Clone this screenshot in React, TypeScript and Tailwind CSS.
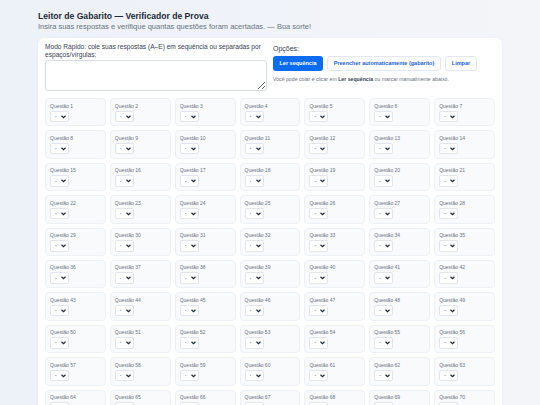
import { useState } from "react"

const OPTIONS = ["-", "A", "B", "C", "D", "E"]
const TOTAL = 100

function QuestionCell({ n, value, onChange }: { n: number; value: string; onChange: (v: string) => void }) {
  return (
    <div className="h-[28.4px] rounded-[4px] border border-[#edf0f5] bg-[#f9fafc] px-[4px] pt-[3.5px]">
      <div className="text-[5px] leading-[6px] text-[#6b7280]">Questão {n}</div>
      <div className="relative mt-[2px] w-[19px]">
        <select
          value={value}
          onChange={(e) => onChange(e.target.value)}
          className="block h-[11.5px] w-[19px] appearance-none rounded-[2px] border border-[#e2e6ec] bg-white pl-[4px] text-[5px] leading-[9px] text-[#374151] outline-none"
        >
          {OPTIONS.map((o) => (
            <option key={o} value={o}>
              {o}
            </option>
          ))}
        </select>
        <svg
          className="pointer-events-none absolute right-[3px] top-[4px] h-[4px] w-[5px]"
          viewBox="0 0 10 8"
          fill="none"
          stroke="#1f2937"
          strokeWidth="2.4"
        >
          <path d="M1 1.5l4 4 4-4" />
        </svg>
      </div>
    </div>
  )
}

export default function App() {
  const [text, setText] = useState("")
  const [answers, setAnswers] = useState<string[]>(Array(TOTAL).fill("-"))

  function readSequence() {
    const letters = text.toUpperCase().replace(/[^A-E]/g, "").split("")
    setAnswers((prev) => prev.map((a, i) => letters[i] ?? a))
  }

  function autoFill() {
    setAnswers(Array.from({ length: TOTAL }, (_, i) => "ABCDE"[i % 5]))
  }

  function clear() {
    setText("")
    setAnswers(Array(TOTAL).fill("-"))
  }

  return (
    <div
      className="min-h-screen bg-gradient-to-r from-[#edf1f8] to-[#f3f5f9] pt-[10px]"
      style={{ fontFamily: '"Liberation Sans", Arial, sans-serif' }}
    >
      <div className="mx-auto w-[464px]">
        <h1 className="text-[8.6px] font-bold leading-[12px] text-[#1f2937]">Leitor de Gabarito — Verificador de Prova</h1>
        <p className="text-[7.5px] leading-[10px] text-[#6b7280]">
          Insira suas respostas e verifique quantas questões foram acertadas. — Boa sorte!
        </p>

        <div className="mt-[6px] rounded-[6px] bg-white px-[7px] pb-[7px] pt-[5px] shadow-[0_1px_3px_rgba(15,23,42,0.05)]">
          <div className="flex gap-[6px]">
            <div className="w-[222px]">
              <label className="block text-[6.6px] leading-[8px] text-[#374151]">
                Modo Rápido: cole suas respostas (A–E) em sequência ou separadas por espaços/vírgulas:
              </label>
              <textarea
                value={text}
                onChange={(e) => setText(e.target.value)}
                className="mt-[1px] block h-[31px] w-full rounded-[3px] border border-[#d7dce4] bg-white p-[3px] text-[7px] outline-none"
              />
            </div>
            <div className="flex-1 pt-[1px]">
              <div className="text-[7px] leading-[9px] text-[#374151]">Opções:</div>
              <div className="mt-[3px] flex gap-[4px]">
                <button
                  onClick={readSequence}
                  className="h-[15px] w-[50px] rounded-[3px] bg-[#0b6cf0] text-[5.5px] font-bold text-white"
                >
                  Ler sequência
                </button>
                <button
                  onClick={autoFill}
                  className="h-[15px] w-[114px] rounded-[3px] border border-[#e3e7ee] bg-white text-[5.5px] font-bold text-[#1d5fd1]"
                >
                  Preencher automaticamente (gabarito)
                </button>
                <button
                  onClick={clear}
                  className="h-[15px] w-[32px] rounded-[3px] border border-[#e3e7ee] bg-white text-[5.5px] font-bold text-[#1d5fd1]"
                >
                  Limpar
                </button>
              </div>
              <p className="mt-[5px] text-[5.2px] leading-[7px] text-[#6b7280]">
                Você pode colar e clicar em <b className="text-[#374151]">Ler sequência</b> ou marcar manualmente abaixo.
              </p>
            </div>
          </div>

          <div className="mt-[7px] grid grid-cols-7 gap-[4px]">
            {answers.map((a, i) => (
              <QuestionCell
                key={i}
                n={i + 1}
                value={a}
                onChange={(v) => setAnswers((prev) => prev.map((x, j) => (j === i ? v : x)))}
              />
            ))}
          </div>
        </div>
      </div>
    </div>
  )
}
